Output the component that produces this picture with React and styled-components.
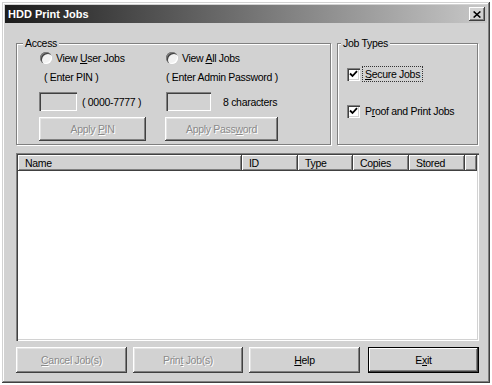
import styled, { createGlobalStyle } from "styled-components";

const GlobalStyle = createGlobalStyle`
  html, body {
    margin: 0;
    padding: 0;
    background: #ffffff;
  }
  body {
    font-family: "Liberation Sans", Arial, sans-serif;
    font-size: 10.5px;
    letter-spacing: -0.3px;
    color: #000;
  }
`;

const Window = styled.div`
  margin: 2px 0 0 2px;
  width: 488px;
  height: 381px;
  box-sizing: border-box;
  padding: 3px;
  background: #d2d2d2;
  box-shadow: inset -1px -1px #404040, inset 1px 1px #d2d2d2,
    inset -2px -2px #808080, inset 2px 2px #fff;
  display: flex;
  flex-direction: column;
`;

const TitleBar = styled.div`
  height: 18px;
  flex: none;
  display: flex;
  align-items: center;
  justify-content: space-between;
  padding: 0 2px 0 3px;
  background: linear-gradient(to right, #1c1c1c, #c8c8c8);
`;

const Title = styled.span`
  color: #fff;
  font-weight: bold;
  font-size: 11px;
  letter-spacing: 0;
`;

const CloseButton = styled.div`
  width: 16px;
  height: 14px;
  background: #d2d2d2;
  display: flex;
  align-items: center;
  justify-content: center;
  box-shadow: inset -1px -1px #404040, inset 1px 1px #fff, inset -2px -2px #808080;
`;

const Body = styled.div`
  flex: 1;
  display: flex;
  flex-direction: column;
  padding: 20px 8px 0 11px;
`;

const TopRow = styled.div`
  display: flex;
  gap: 6px;
`;

const GroupBox = styled.div`
  position: relative;
  box-sizing: border-box;
  width: ${(p) => p.$width}px;
  height: 102px;
  flex: none;
  border: 1px solid #808080;
  box-shadow: inset 1px 1px #fff, 1px 1px #fff;
`;

const Legend = styled.span`
  position: absolute;
  top: -7px;
  left: ${(p) => p.$left}px;
  padding: 0 2px;
  line-height: 12px;
  background: #d2d2d2;
`;

const AccessGrid = styled.div`
  display: grid;
  grid-template-columns: 107px 113px;
  column-gap: 19px;
  padding: 7px 0 0 22px;
`;

const Column = styled.div`
  display: flex;
  flex-direction: column;
`;

const RadioRow = styled.div`
  display: flex;
  align-items: center;
  gap: 4px;
  height: 14px;
  margin-left: 1px;
`;

const RadioDot = styled.span`
  width: 12px;
  height: 12px;
  box-sizing: border-box;
  border-radius: 50%;
  background: #f2f2f2;
  box-shadow: inset 1px 1px #808080, inset 2px 2px #404040, inset -1px -1px #fff;
`;

const Hint = styled.div`
  margin-top: 6px;
  margin-left: ${(p) => p.$indent}px;
  height: 12px;
  line-height: 12px;
`;

const InputRow = styled.div`
  margin-top: 9px;
  height: 19px;
  display: flex;
  align-items: center;
`;

const TextBox = styled.div`
  width: ${(p) => p.$width}px;
  height: 19px;
  margin-left: ${(p) => p.$indent || 0}px;
  background: #d2d2d2;
  box-shadow: inset 1px 1px #808080, inset 2px 2px #404040,
    inset -1px -1px #fff, inset -2px -2px #d2d2d2;
`;

const InputNote = styled.span`
  margin-left: ${(p) => p.$gap}px;
`;

const Button = styled.div`
  box-sizing: border-box;
  width: ${(p) => p.$width}px;
  height: ${(p) => p.$height || 26}px;
  margin-top: ${(p) => p.$top || 0}px;
  flex: none;
  display: flex;
  align-items: center;
  justify-content: center;
  background: #d2d2d2;
  color: ${(p) => (p.$disabled ? "#8a8a8a" : "#000")};
  text-shadow: ${(p) => (p.$disabled ? "1px 1px #fff" : "none")};
  box-shadow: ${(p) =>
    p.$default
      ? "inset 0 0 0 1px #000, inset -2px -2px #404040, inset 2px 2px #fff, inset -3px -3px #808080"
      : "inset -1px -1px #404040, inset 1px 1px #fff, inset -2px -2px #808080, inset 2px 2px #e4e4e4"};
`;

const Key = styled.span`
  text-decoration: underline;
`;

const JobTypes = styled.div`
  display: flex;
  flex-direction: column;
  gap: 21px;
  padding: 22px 0 0 9px;
`;

const CheckRow = styled.div`
  display: flex;
  align-items: center;
  gap: 2px;
  height: 16px;
`;

const CheckBox = styled.span`
  width: 13px;
  height: 13px;
  display: flex;
  align-items: center;
  justify-content: center;
  background: #fff;
  box-shadow: inset 1px 1px #808080, inset 2px 2px #404040,
    inset -1px -1px #fff, inset -2px -2px #d2d2d2;
`;

const CheckLabel = styled.span`
  padding: 1px 2px;
  border: 1px dotted ${(p) => (p.$focused ? "#333" : "transparent")};
`;

const List = styled.div`
  margin-top: 8px;
  height: 188px;
  box-sizing: border-box;
  padding: 2px;
  background: #fff;
  box-shadow: inset 1px 1px #808080, inset 2px 2px #404040,
    inset -1px -1px #fff, inset -2px -2px #d2d2d2;
`;

const HeaderRow = styled.div`
  display: flex;
  height: 16px;
`;

const HeaderCell = styled.div`
  width: ${(p) => p.$width}px;
  flex: ${(p) => (p.$fill ? "1" : "none")};
  box-sizing: border-box;
  padding-left: 7px;
  line-height: 16px;
  background: #d2d2d2;
  box-shadow: inset -1px -1px #404040, inset 1px 1px #fff, inset -2px -2px #808080;
`;

const ButtonRow = styled.div`
  margin-top: 6px;
  display: flex;
`;

const Spacer = styled.span`
  width: ${(p) => p.$w}px;
  flex: none;
`;

const columns = [
  { label: "Name", width: 224 },
  { label: "ID", width: 56 },
  { label: "Type", width: 55 },
  { label: "Copies", width: 56 },
  { label: "Stored", width: 56 },
];

function Check() {
  return (
    <svg width="9" height="8" viewBox="0 0 9 8">
      <path d="M1 3.5 L3.5 6 L8 1.2" fill="none" stroke="#000" strokeWidth="1.8" />
    </svg>
  );
}

export default function App() {
  return (
    <>
      <GlobalStyle />
      <Window>
        <TitleBar>
          <Title>HDD Print Jobs</Title>
          <CloseButton>
            <svg width="8" height="7" viewBox="0 0 8 7">
              <path d="M0.6 0.5 L7.4 6.5 M7.4 0.5 L0.6 6.5" stroke="#000" strokeWidth="1.6" />
            </svg>
          </CloseButton>
        </TitleBar>

        <Body>
          <TopRow>
            <GroupBox $width={315}>
              <Legend $left={6}>Access</Legend>
              <AccessGrid>
                <Column>
                  <RadioRow>
                    <RadioDot />
                    <span>View <Key>U</Key>ser Jobs</span>
                  </RadioRow>
                  <Hint $indent={5}>( Enter PIN )</Hint>
                  <InputRow>
                    <TextBox $width={38} />
                    <InputNote $gap={5}>( 0000-7777 )</InputNote>
                  </InputRow>
                  <Button $width={107} $height={24} $top={6} $disabled>
                    <span>Apply <Key>P</Key>IN</span>
                  </Button>
                </Column>
                <Column>
                  <RadioRow>
                    <RadioDot />
                    <span>View <Key>A</Key>ll Jobs</span>
                  </RadioRow>
                  <Hint $indent={1}>( Enter Admin Password )</Hint>
                  <InputRow>
                    <TextBox $width={45} $indent={1} />
                    <InputNote $gap={12}>8 characters</InputNote>
                  </InputRow>
                  <Button $width={113} $height={24} $top={6} $disabled>
                    <span>Apply Pass<Key>w</Key>ord</span>
                  </Button>
                </Column>
              </AccessGrid>
            </GroupBox>

            <GroupBox $width={141}>
              <Legend $left={3}>Job Types</Legend>
              <JobTypes>
                <CheckRow>
                  <CheckBox><Check /></CheckBox>
                  <CheckLabel $focused><Key>S</Key>ecure Jobs</CheckLabel>
                </CheckRow>
                <CheckRow>
                  <CheckBox><Check /></CheckBox>
                  <CheckLabel>P<Key>r</Key>oof and Print Jobs</CheckLabel>
                </CheckRow>
              </JobTypes>
            </GroupBox>
          </TopRow>

          <List>
            <HeaderRow>
              {columns.map((c) => (
                <HeaderCell key={c.label} $width={c.width}>{c.label}</HeaderCell>
              ))}
              <HeaderCell $fill />
            </HeaderRow>
          </List>

          <ButtonRow>
            <Button $width={111} $disabled><span><Key>C</Key>ancel Job(s)</span></Button>
            <Spacer $w={6} />
            <Button $width={110} $disabled><span>Prin<Key>t</Key> Job(s)</span></Button>
            <Spacer $w={6} />
            <Button $width={111}><span><Key>H</Key>elp</span></Button>
            <Spacer $w={8} />
            <Button $width={111} $default><span>E<Key>x</Key>it</span></Button>
          </ButtonRow>
        </Body>
      </Window>
    </>
  );
}
